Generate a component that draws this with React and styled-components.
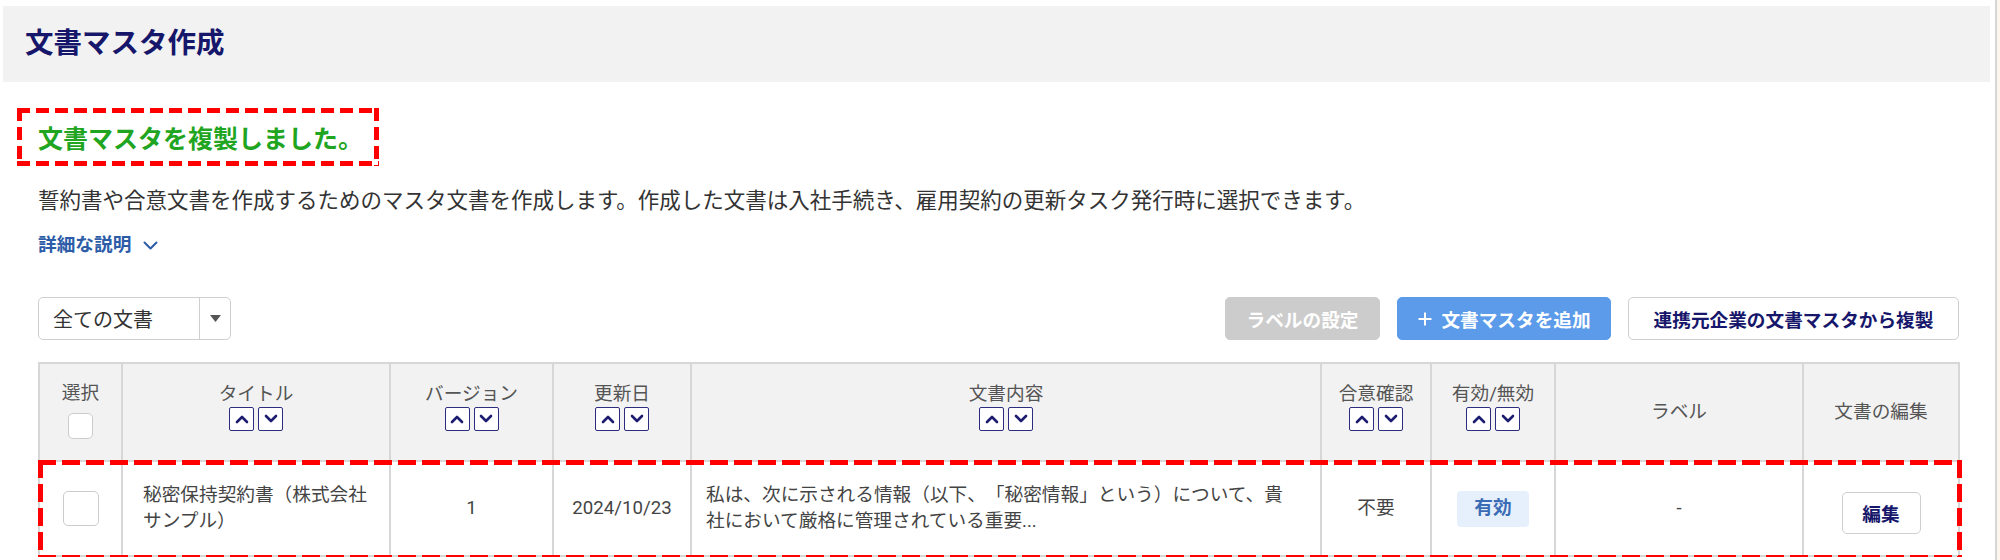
import React from 'react';
import styled, { createGlobalStyle, css } from 'styled-components';

const FONT = `Roboto, "Noto Sans CJK JP", "Noto Sans", sans-serif`;
const NAVY = '#16166b';

const GlobalStyle = createGlobalStyle`
  html {
    background: linear-gradient(to right, #ffffff 0 1995px, #d6d6d6 1995px 1997px, #fbf7ef 1997px);
  }
  body {
    margin: 0;
    font-family: ${FONT};
    color: #333;
    text-spacing-trim: space-all;
  }
  * { box-sizing: border-box; }
`;

const dashedFrame = (dash, gap, w = 5, color = '#ff0000') => css`
  background:
    repeating-linear-gradient(90deg, ${color} 0 ${dash}px, transparent ${dash}px ${dash + gap}px) top left / 100% ${w}px no-repeat,
    repeating-linear-gradient(90deg, ${color} 0 ${dash}px, transparent ${dash}px ${dash + gap}px) bottom left / 100% ${w}px no-repeat,
    repeating-linear-gradient(180deg, ${color} 0 ${dash}px, transparent ${dash}px ${dash + gap}px) top left / ${w}px 100% no-repeat,
    repeating-linear-gradient(180deg, ${color} 0 ${dash}px, transparent ${dash}px ${dash + gap}px) top right / ${w}px 100% no-repeat;
`;

const Page = styled.div`
  width: 1990px;
  padding: 6px 0 0 3px;
`;

const PageHeader = styled.header`
  height: 76px;
  background: #f2f2f2;
  display: flex;
  align-items: center;
  padding-left: 22px;
`;

const PageTitle = styled.h1`
  margin: 0;
  font-size: 28.5px;
  font-weight: 700;
  color: ${NAVY};
  line-height: 1;
`;

const Content = styled.main`
  width: 1955px;
  padding-left: 35px;
  display: flex;
  flex-direction: column;
  align-items: flex-start;
`;

const SuccessMessage = styled.div`
  margin: 26px 0 0 -21px;
  height: 58px;
  padding: 0 16px 0 21px;
  display: flex;
  align-items: center;
  font-size: 25px;
  font-weight: 700;
  color: #1fa51f;
  ${dashedFrame(13, 6)}
`;

const Description = styled.p`
  margin: 19px 0 0;
  font-size: 21.5px;
  line-height: 32px;
  color: #333;
`;

const DetailToggle = styled.button`
  margin-top: 14px;
  padding: 0;
  border: none;
  background: none;
  display: flex;
  align-items: center;
  gap: 12px;
  font-family: ${FONT};
  font-size: 18.67px;
  font-weight: 700;
  line-height: 28px;
  color: #2c5ca8;
  cursor: pointer;
`;

const Toolbar = styled.div`
  margin-top: 38px;
  width: 1921px;
  display: flex;
  justify-content: space-between;
  align-items: center;
`;

const SelectBox = styled.div`
  width: 193px;
  height: 43px;
  border: 1.5px solid #cfcfcf;
  border-radius: 5px;
  display: flex;
  align-items: stretch;
  background: #fff;
`;

const SelectValue = styled.div`
  flex: 1;
  display: flex;
  align-items: center;
  padding-left: 14px;
  font-size: 20px;
  color: #333;
`;

const SelectArrow = styled.div`
  width: 31px;
  border-left: 1.5px solid #cfcfcf;
  display: flex;
  align-items: center;
  justify-content: center;
`;

const ButtonGroup = styled.div`
  display: flex;
  gap: 17px;
`;

const variants = {
  disabled: css`
    background: #cccccc;
    border-color: #cccccc;
    color: #ffffff;
  `,
  primary: css`
    background: #5b9bea;
    border-color: #5b9bea;
    color: #ffffff;
  `,
  secondary: css`
    background: #ffffff;
    border-color: #cfcfcf;
    color: ${NAVY};
  `,
};

const ActionButton = styled.button`
  height: 43px;
  width: ${(p) => p.$w}px;
  border: 1.5px solid;
  border-radius: 5px;
  font-family: ${FONT};
  font-size: 18.67px;
  font-weight: 700;
  display: flex;
  align-items: center;
  justify-content: center;
  gap: 8px;
  padding: 0;
  ${(p) => variants[p.$variant]}
`;

const TableWrap = styled.div`
  position: relative;
  margin-top: 22px;
  width: 1920px;
`;

const Table = styled.table`
  width: 1920px;
  table-layout: fixed;
  border-collapse: collapse;
  border: 2px solid #d7d7d7;
`;

const HeadCell = styled.th`
  height: 98px;
  background: #f2f2f2;
  border: 2px solid #d7d7d7;
  font-weight: 400;
  font-size: 18.67px;
  color: #555;
  text-align: center;
  vertical-align: middle;
  padding: 0;
`;

const HeadStack = styled.div`
  display: flex;
  flex-direction: column;
  align-items: center;
  padding-bottom: ${(p) => p.$pb || 0}px;
`;

const HeadLabel = styled.span`
  line-height: 26px;
  white-space: nowrap;
`;

const SortGroup = styled.div`
  display: flex;
  gap: 4px;
`;

const SortButton = styled.span`
  width: 25px;
  height: 24px;
  border: 1.5px solid #2d2d80;
  border-radius: 2px;
  background: #fff;
  display: flex;
  align-items: center;
  justify-content: center;
`;

const Check = styled.span`
  display: block;
  width: ${(p) => p.$size}px;
  height: ${(p) => p.$h || p.$size}px;
  border: 1.5px solid #cccccc;
  border-radius: 5px;
  background: #fff;
  margin-top: ${(p) => p.$mt || 0}px;
`;

const BodyCell = styled.td`
  height: 95px;
  border: 2px solid #d7d7d7;
  font-size: 18.67px;
  line-height: 25.5px;
  color: #444;
  text-align: ${(p) => p.$align || 'center'};
  vertical-align: middle;
  padding: ${(p) => p.$pad || '0'};
`;

const CellCenter = styled.div`
  display: flex;
  justify-content: center;
  align-items: center;
  padding-top: ${(p) => p.$pt || 0}px;
`;

const Badge = styled.span`
  display: inline-flex;
  align-items: center;
  justify-content: center;
  width: 72px;
  height: 36px;
  border-radius: 4px;
  background: #e6f0fc;
  color: #3a6cb5;
  font-weight: 700;
`;

const EditButton = styled.button`
  width: 79px;
  height: 42px;
  border: 1.5px solid #cfcfcf;
  border-radius: 5px;
  background: #fff;
  color: ${NAVY};
  font-family: ${FONT};
  font-size: 18.67px;
  font-weight: 700;
  padding: 0;
`;

const RowHighlight = styled.div`
  position: absolute;
  top: 98px;
  left: 0;
  right: -4px;
  bottom: -3px;
  pointer-events: none;
  ${dashedFrame(18, 6, 5)}
`;

const ChevronUp = () => (
  <svg width="14" height="10" viewBox="0 0 14 10">
    <polyline points="2,8 7,3 12,8" fill="none" stroke="#1c1c70" strokeWidth="2.6" strokeLinecap="round" strokeLinejoin="round" />
  </svg>
);

const ChevronDown = () => (
  <svg width="14" height="10" viewBox="0 0 14 10">
    <polyline points="2,2 7,7 12,2" fill="none" stroke="#1c1c70" strokeWidth="2.6" strokeLinecap="round" strokeLinejoin="round" />
  </svg>
);

const Sort = () => (
  <SortGroup>
    <SortButton><ChevronUp /></SortButton>
    <SortButton><ChevronDown /></SortButton>
  </SortGroup>
);

const columns = [
  { key: 'select', w: 83 },
  { key: 'title', label: 'タイトル', w: 268, sort: true },
  { key: 'version', label: 'バージョン', w: 163, sort: true },
  { key: 'updated', label: '更新日', w: 138, sort: true },
  { key: 'content', label: '文書内容', w: 630, sort: true },
  { key: 'agree', label: '合意確認', w: 110, sort: true },
  { key: 'valid', label: '有効/無効', w: 124, sort: true },
  { key: 'label', label: 'ラベル', w: 248 },
  { key: 'edit', label: '文書の編集', w: 156 },
];

export default function App() {
  return (
    <>
      <GlobalStyle />
      <Page>
        <PageHeader>
          <PageTitle>文書マスタ作成</PageTitle>
        </PageHeader>
        <Content>
          <SuccessMessage>文書マスタを複製しました。</SuccessMessage>
          <Description>
            誓約書や合意文書を作成するためのマスタ文書を作成します。作成した文書は入社手続き、雇用契約の更新タスク発行時に選択できます。
          </Description>
          <DetailToggle>
            詳細な説明
            <svg width="15" height="9" viewBox="0 0 15 9">
              <polyline points="1.5,1.5 7.5,7.5 13.5,1.5" fill="none" stroke="#2c5ca8" strokeWidth="2" strokeLinecap="round" strokeLinejoin="round" />
            </svg>
          </DetailToggle>
          <Toolbar>
            <SelectBox>
              <SelectValue>全ての文書</SelectValue>
              <SelectArrow>
                <svg width="11" height="7" viewBox="0 0 11 7">
                  <polygon points="0,0 11,0 5.5,7" fill="#555" />
                </svg>
              </SelectArrow>
            </SelectBox>
            <ButtonGroup>
              <ActionButton $variant="disabled" $w={155}>ラベルの設定</ActionButton>
              <ActionButton $variant="primary" $w={214}>
                <svg width="16" height="16" viewBox="0 0 16 16">
                  <path d="M8 1.5v13M1.5 8h13" stroke="#fff" strokeWidth="2" />
                </svg>
                文書マスタを追加
              </ActionButton>
              <ActionButton $variant="secondary" $w={331}>連携元企業の文書マスタから複製</ActionButton>
            </ButtonGroup>
          </Toolbar>
          <TableWrap>
            <Table>
              <colgroup>
                {columns.map((c) => (
                  <col key={c.key} style={{ width: c.w }} />
                ))}
              </colgroup>
              <thead>
                <tr>
                  <HeadCell>
                    <HeadStack $pb={6}>
                      <HeadLabel>選択</HeadLabel>
                      <Check $size={25} $h={26} $mt={7} />
                    </HeadStack>
                  </HeadCell>
                  {columns.slice(1).map((c) => (
                    <HeadCell key={c.key}>
                      <HeadStack $pb={c.sort ? 12 : 0}>
                        <HeadLabel>{c.label}</HeadLabel>
                        {c.sort && <Sort />}
                      </HeadStack>
                    </HeadCell>
                  ))}
                </tr>
              </thead>
              <tbody>
                <tr>
                  <BodyCell>
                    <CellCenter>
                      <Check $size={36} $h={35} />
                    </CellCenter>
                  </BodyCell>
                  <BodyCell $align="left" $pad="0 20px">秘密保持契約書（株式会社サンプル）</BodyCell>
                  <BodyCell>1</BodyCell>
                  <BodyCell>2024/10/23</BodyCell>
                  <BodyCell $align="left" $pad="0 24px 0 14px">
                    私は、次に示される情報（以下、「秘密情報」という）について、貴社において厳格に管理されている重要...
                  </BodyCell>
                  <BodyCell>不要</BodyCell>
                  <BodyCell>
                    <CellCenter>
                      <Badge>有効</Badge>
                    </CellCenter>
                  </BodyCell>
                  <BodyCell>-</BodyCell>
                  <BodyCell>
                    <CellCenter $pt={8}>
                      <EditButton>編集</EditButton>
                    </CellCenter>
                  </BodyCell>
                </tr>
              </tbody>
            </Table>
            <RowHighlight />
          </TableWrap>
        </Content>
      </Page>
    </>
  );
}
